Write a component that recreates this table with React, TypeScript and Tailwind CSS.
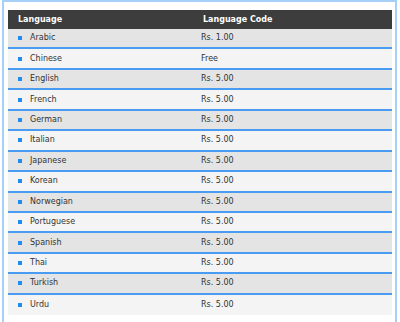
import React from "react";

const rows: [string, string][] = [
  ["Arabic", "Rs. 1.00"],
  ["Chinese", "Free"],
  ["English", "Rs. 5.00"],
  ["French", "Rs. 5.00"],
  ["German", "Rs. 5.00"],
  ["Italian", "Rs. 5.00"],
  ["Japanese", "Rs. 5.00"],
  ["Korean", "Rs. 5.00"],
  ["Norwegian", "Rs. 5.00"],
  ["Portuguese", "Rs. 5.00"],
  ["Spanish", "Rs. 5.00"],
  ["Thai", "Rs. 5.00"],
  ["Turkish", "Rs. 5.00"],
  ["Urdu", "Rs. 5.00"],
];

export default function App() {
  return (
    <div
      className="w-[400px] h-[322px] bg-white overflow-hidden"
      style={{ fontFamily: '"DejaVu Sans", Verdana, sans-serif' }}
    >
      <div className="ml-[2px] w-[395px] h-[330px] border-2 border-b-0 border-[#a6d0f7] pt-[8px] pl-[4px]">
        <div className="w-[384px]">
          <div className="flex items-center h-[19px] bg-[#3d3d3d] text-white font-bold text-[8px]">
            <div className="w-[195px] pl-[10px]">Language</div>
            <div>Language Code</div>
          </div>
          {rows.map(([lang, code], i) => (
            <div
              key={lang}
              className={
                "flex items-center h-[20.45px] box-border text-[8px] text-[#333333] " +
                (i % 2 === 0 ? "bg-[#e4e4e4] " : "bg-[#f4f4f4] ") +
                (i < rows.length - 1 ? "border-b-2 border-[#4a9cf3]" : "")
              }
            >
              <div className="w-[193px] flex items-center pl-[10px]">
                <span className="w-[4px] h-[4px] bg-[#1e8cf0] mr-[8px]" />
                <span>{lang}</span>
              </div>
              <div>{code}</div>
            </div>
          ))}
        </div>
      </div>
    </div>
  );
}
